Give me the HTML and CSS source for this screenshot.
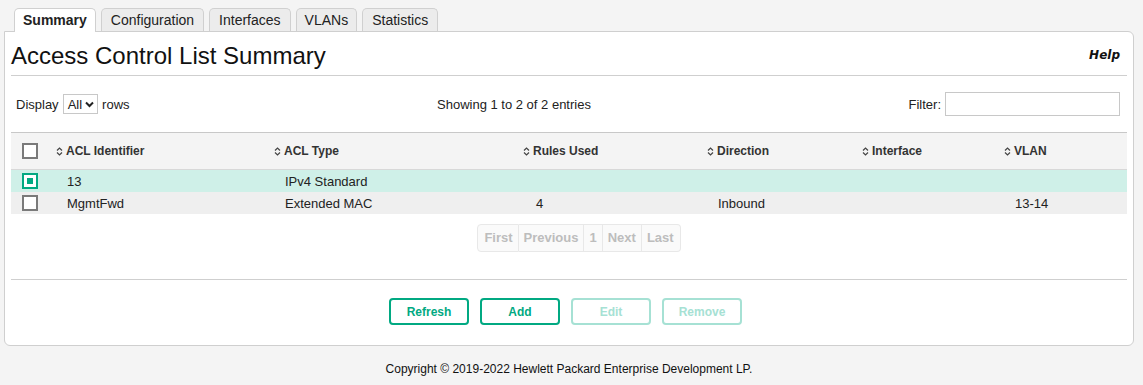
FILE: index.html
```html
<!DOCTYPE html>
<html lang="en">
<head>
  <meta charset="UTF-8">
  <title>Access Control List Summary</title>
  <link rel="stylesheet" href="styles.css">
</head>
<body>
  <div class="page">
    <ul class="tabs">
      <li class="tab active">Summary</li>
      <li class="tab">Configuration</li>
      <li class="tab">Interfaces</li>
      <li class="tab">VLANs</li>
      <li class="tab">Statistics</li>
    </ul>
    <div class="panel">
      <div class="title-row">
        <h1>Access Control List Summary</h1>
        <a class="help">Help</a>
      </div>
      <div class="toolbar">
        <div class="length">Display
          <span class="select">All <svg width="9" height="7" viewBox="0 0 9 7"><path d="M1 1.5 L4.5 5 L8 1.5" fill="none" stroke="#222" stroke-width="2"/></svg></span>
          rows</div>
        <div class="info">Showing 1 to 2 of 2 entries</div>
        <div class="filter">Filter: <input type="text"></div>
      </div>
      <table class="grid">
        <colgroup>
          <col class="c-check"><col class="c-id"><col class="c-type"><col class="c-rules"><col class="c-dir"><col class="c-if"><col class="c-vlan">
        </colgroup>
        <thead>
          <tr>
            <th class="check"><span class="box"></span></th>
            <th><i class="sort"></i>ACL Identifier</th>
            <th><i class="sort"></i>ACL Type</th>
            <th><i class="sort"></i>Rules Used</th>
            <th><i class="sort"></i>Direction</th>
            <th><i class="sort"></i>Interface</th>
            <th><i class="sort"></i>VLAN</th>
          </tr>
        </thead>
        <tbody>
          <tr class="selected">
            <td class="check"><span class="box on"></span></td>
            <td>13</td><td>IPv4 Standard</td><td></td><td></td><td></td><td></td>
          </tr>
          <tr>
            <td class="check"><span class="box"></span></td>
            <td>MgmtFwd</td><td>Extended MAC</td><td class="num">4</td><td>Inbound</td><td></td><td>13-14</td>
          </tr>
        </tbody>
      </table>
      <div class="pager">
        <span>First</span><span>Previous</span><span>1</span><span>Next</span><span>Last</span>
      </div>
      <div class="actions">
        <button>Refresh</button>
        <button>Add</button>
        <button disabled>Edit</button>
        <button disabled>Remove</button>
      </div>
    </div>
    <div class="footer">Copyright &copy; 2019-2022 Hewlett Packard Enterprise Development LP.</div>
  </div>
</body>
</html>
```

FILE: styles.css
```css
body {
  margin: 0;
  background: #f4f4f4;
  font-family: "Liberation Sans", Arial, sans-serif;
  font-size: 13px;
  color: #222;
}
.page {
  padding: 8px 9px 0 4px;
}
.tabs {
  list-style: none;
  margin: 0;
  padding: 0 0 0 10px;
  display: flex;
  gap: 5px;
  position: relative;
  z-index: 1;
}
.tab {
  height: 22px;
  line-height: 23px;
  padding: 0 9px;
  font-size: 14px;
  background: #ececec;
  border: 1px solid #d0d0d0;
  border-bottom: none;
  border-radius: 5px 5px 0 0;
  color: #222;
}
.tab.active {
  background: #fff;
  font-weight: bold;
  height: 23px;
  margin-bottom: -1px;
  padding: 0 8px;
}
.tab:nth-child(4) {
  padding: 0 8px;
}
.panel {
  background: #fff;
  border: 1px solid #cfcfcf;
  border-radius: 0 6px 6px 6px;
  padding: 0 6px 20px 6px;
}
.title-row {
  display: flex;
  justify-content: space-between;
  align-items: flex-start;
  border-bottom: 1px solid #cfcfcf;
  height: 43px;
}
h1 {
  margin: 10px 0 0 0;
  font-size: 24px;
  font-weight: normal;
  color: #111;
}
.help {
  margin: 16px 7px 0 0;
  font-family: "DejaVu Sans", sans-serif;
  font-size: 12px;
  font-weight: bold;
  font-style: italic;
  color: #111;
}
.toolbar {
  display: flex;
  align-items: center;
  height: 56px;
  padding: 0 7px 0 5px;
  font-size: 13px;
}
.length {
  display: flex;
  align-items: center;
  gap: 4px;
  width: 421px;
  margin-left: 0;
}
.select {
  display: inline-flex;
  align-items: center;
  gap: 3px;
  height: 18px;
  padding: 0 3px 0 4px;
  border: 1px solid #c8c8c8;
}
.info {
  flex: 1;
}
.filter {
  display: flex;
  align-items: center;
  gap: 4px;
}
.filter input {
  width: 169px;
  height: 18px;
  border: 1px solid #c8c8c8;
  padding: 2px;
  margin: 0;
}
.grid {
  width: 100%;
  border-collapse: collapse;
  table-layout: fixed;
}
.c-check { width: 44px; }
.c-id { width: 218px; }
.c-type { width: 249px; }
.c-rules { width: 184px; }
.c-dir { width: 155px; }
.c-if { width: 142px; }
.c-vlan { width: 124px; }
thead tr {
  background: #f4f4f4;
  border-top: 1px solid #c8c8c8;
  border-bottom: 1px solid #d8d8d8;
}
th {
  height: 36px;
  text-align: left;
  font-size: 12px;
  font-weight: bold;
  color: #333;
  padding: 0 0 0 1px;
}
.sort {
  display: inline-block;
  width: 7px;
  height: 9px;
  margin-right: 3px;
  vertical-align: -1px;
  background:
    url("data:image/svg+xml,%3Csvg xmlns='http://www.w3.org/2000/svg' width='7' height='9' viewBox='0 0 7 9'%3E%3Cpath d='M1 3.5 L3.5 1 L6 3.5 M1 5.5 L3.5 8 L6 5.5' fill='none' stroke='%23444' stroke-width='1.2'/%3E%3C/svg%3E") no-repeat;
}
td {
  height: 22px;
  padding: 0 0 0 12px;
  font-size: 13px;
  color: #222;
}
td.num { padding-left: 14px; }
th.check, td.check {
  padding: 0 0 0 11px;
}
tbody tr { background: #efefef; }
tbody tr.selected { background: #cff0e8; }
.box {
  display: block;
  width: 12px;
  height: 12px;
  border: 2px solid #7a7a7a;
  background: #fff;
}
.box.on {
  border-color: #01a982;
  position: relative;
}
.box.on::after {
  content: "";
  position: absolute;
  left: 3px;
  top: 3px;
  width: 6px;
  height: 6px;
  background: #01a982;
}
.pager {
  display: flex;
  justify-content: center;
  margin: 10px 0 27px 20px;
}
.pager span {
  display: inline-block;
  padding: 0 5px;
  height: 26px;
  line-height: 26px;
  border: 1px solid #e8e8e8;
  border-left: none;
  font-weight: bold;
  color: #bdbdbd;
  background: #fafafa;
}
.pager span:first-child {
  padding-left: 6px;
  border-left: 1px solid #e8e8e8;
  border-radius: 4px 0 0 4px;
}
.pager span:last-child {
  padding-right: 6px;
  border-radius: 0 4px 4px 0;
}
.actions {
  border-top: 1px solid #cfcfcf;
  display: flex;
  justify-content: center;
  gap: 11px;
  padding: 18px 7px 0 0;
}
button {
  width: 80px;
  height: 27px;
  border: 2px solid #01a982;
  border-radius: 4px;
  background: #fff;
  color: #01a982;
  font-family: "Liberation Sans", Arial, sans-serif;
  font-size: 12px;
  font-weight: bold;
  padding: 0;
}
button:disabled {
  border-color: #a6e1d4;
  color: #a6e1d4;
}
.footer {
  text-align: center;
  font-size: 12px;
  color: #111;
  padding: 16px 0 0 0;
}
```
